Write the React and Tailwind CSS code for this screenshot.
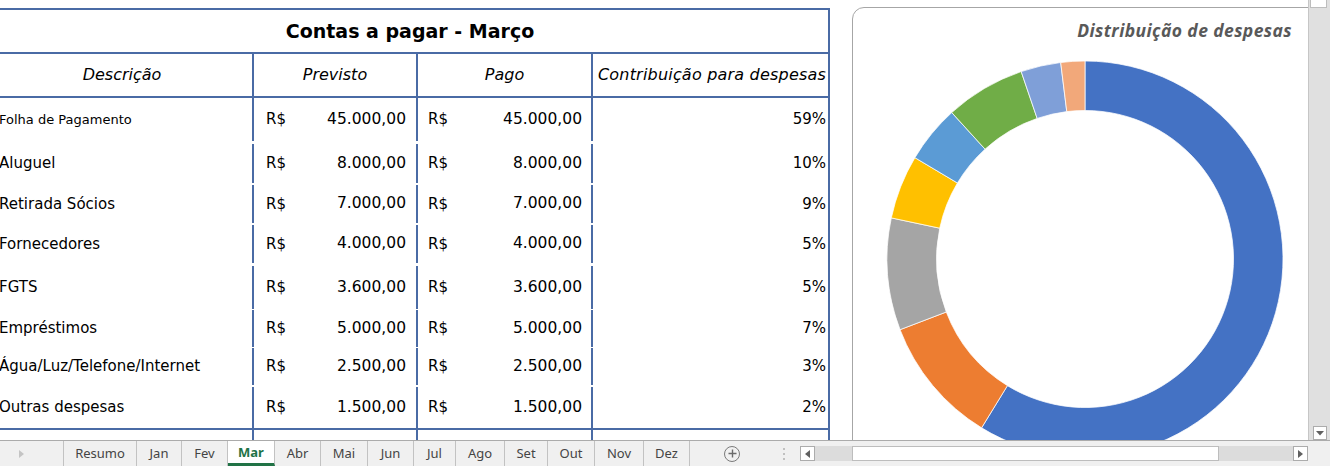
import React from "react";

const rows = [
  { desc: "Folha de Pagamento", prev: "45.000,00", pago: "45.000,00", pct: "59%", h: "h-[43px]", small: true },
  { desc: "Aluguel", prev: "8.000,00", pago: "8.000,00", pct: "10%", h: "h-[42px] pt-[3px]" },
  { desc: "Retirada Sócios", prev: "7.000,00", pago: "7.000,00", pct: "9%", h: "h-[40px] pt-[2px]" },
  { desc: "Fornecedores", prev: "4.000,00", pago: "4.000,00", pct: "5%", h: "h-[40px] pt-[2px]" },
  { desc: "FGTS", prev: "3.600,00", pago: "3.600,00", pct: "5%", h: "h-[46px] pt-[3px]" },
  { desc: "Empréstimos", prev: "5.000,00", pago: "5.000,00", pct: "7%", h: "h-[38px] pt-[1px]" },
  { desc: "Água/Luz/Telefone/Internet", prev: "2.500,00", pago: "2.500,00", pct: "3%", h: "h-[38px] pt-[1px]" },
  { desc: "Outras despesas", prev: "1.500,00", pago: "1.500,00", pct: "2%", h: "h-[45px] pt-[2px] border-b-2" },
];

const slices = [
  { v: 45000, c: "#4472C4" },
  { v: 8000, c: "#ED7D31" },
  { v: 7000, c: "#A5A5A5" },
  { v: 4000, c: "#FFC000" },
  { v: 3600, c: "#5B9BD5" },
  { v: 5000, c: "#70AD47" },
  { v: 2500, c: "#7F9FD8" },
  { v: 1500, c: "#F2A87A" },
];

const tabs = [
  { name: "Resumo", w: "w-[73px]" },
  { name: "Jan", w: "w-[45px]" },
  { name: "Fev", w: "w-[46px]" },
  { name: "Mar", w: "w-[47px]", active: true },
  { name: "Abr", w: "w-[46px]" },
  { name: "Mai", w: "w-[47px]" },
  { name: "Jun", w: "w-[46px]" },
  { name: "Jul", w: "w-[42px]" },
  { name: "Ago", w: "w-[49px]" },
  { name: "Set", w: "w-[43px]" },
  { name: "Out", w: "w-[47px]" },
  { name: "Nov", w: "w-[49px]" },
  { name: "Dez", w: "w-[46px]" },
];

// annular sector, angles measured clockwise from 12 o'clock
const arc = (cx, cy, R, r, a0, a1) => {
  const p = (rad, a) => [cx + rad * Math.sin(a), cy - rad * Math.cos(a)];
  const large = a1 - a0 > Math.PI ? 1 : 0;
  const [x0, y0] = p(R, a0);
  const [x1, y1] = p(R, a1);
  const [x2, y2] = p(r, a1);
  const [x3, y3] = p(r, a0);
  return `M${x0} ${y0} A${R} ${R} 0 ${large} 1 ${x1} ${y1} L${x2} ${y2} A${r} ${r} 0 ${large} 0 ${x3} ${y3} Z`;
};

const Donut = () => {
  const total = slices.reduce((s, x) => s + x.v, 0);
  let a = 0;
  return (
    <svg width="398" height="398" viewBox="0 0 398 398" className="ml-[33px] mt-[18px] shrink-0">
      {slices.map((s, i) => {
        const a0 = a;
        a += (s.v / total) * Math.PI * 2;
        return <path key={i} d={arc(199, 199, 198, 148.5, a0, a)} fill={s.c} stroke="#fff" strokeWidth="0.75" />;
      })}
    </svg>
  );
};

const App = () => {
  return (
    <div className="w-[1330px] h-[466px] overflow-hidden bg-white flex flex-col">
      {/* SHEET + VSCROLL */}
      <div className="h-[440px] flex">
        <div className="w-[1308px] h-[440px] overflow-hidden flex items-start">
          {/* TABLE */}
          <div className="-ml-[10px] mt-[8px] w-[840px] shrink-0 text-black font-['DejaVu_Sans',sans-serif]">
            <div className="h-[46px] border-2 border-[#4a6ba5] flex items-center justify-center font-bold text-[19px]">
              Contas a pagar - Março
            </div>
            <div className="h-[44px] flex border-x-2 border-b-2 border-[#4a6ba5] italic text-[16px]">
              <div className="w-[262px] border-r-2 border-[#4a6ba5] flex items-center justify-center">Descrição</div>
              <div className="w-[164px] border-r-2 border-[#4a6ba5] flex items-center justify-center">Previsto</div>
              <div className="w-[175px] border-r-2 border-[#4a6ba5] flex items-center justify-center">Pago</div>
              <div className="flex-1 flex items-center justify-end pr-[2px] whitespace-nowrap tracking-[0.2px]">Contribuição para despesas</div>
            </div>

            {rows.map((r) => (
              <div key={r.desc} className={`flex border-x-2 border-[#4a6ba5] text-[15px] ${r.h}`}>
                <div className={`w-[262px] border-r-2 border-[#4a6ba5] flex items-center pl-[7px] whitespace-nowrap ${r.small ? "text-[13px]" : ""}`}>
                  {r.desc}
                </div>
                <div className="w-[164px] border-r-2 border-[#4a6ba5] flex items-center justify-between pl-[12px] pr-[10px]">
                  <span>R$</span>
                  <span className="text-[15.5px]">{r.prev}</span>
                </div>
                <div className="w-[175px] border-r-2 border-[#4a6ba5] flex items-center justify-between pl-[10px] pr-[9px]">
                  <span>R$</span>
                  <span className="text-[15.5px]">{r.pago}</span>
                </div>
                <div className="flex-1 flex items-center justify-end pr-[2px]">{r.pct}</div>
              </div>
            ))}

            <div className="h-[20px] flex border-x-2 border-[#4a6ba5]">
              <div className="w-[262px] border-r-2 border-[#4a6ba5]" />
              <div className="w-[164px] border-r-2 border-[#4a6ba5]" />
              <div className="w-[175px] border-r-2 border-[#4a6ba5]" />
            </div>
          </div>

          {/* CHART */}
          <div className="ml-[22px] mt-[7px] w-[480px] h-[460px] shrink-0 border border-[#a6a6a6] rounded-tl-[12px] bg-white flex flex-col">
            <div className="w-[439px] pt-[10px] text-right leading-[24px] text-[17.5px] tracking-[0.4px] font-bold italic text-[#595959] font-['Open_Sans',sans-serif]">
              Distribuição de despesas
            </div>
            <Donut />
          </div>
        </div>

        {/* VERTICAL SCROLLBAR */}
        <div className="w-[22px] h-[440px] border-l border-[#c6c6c6] bg-[#e0e0e0] flex flex-col">
          <div className="ml-[1px] -mt-[1px] w-[17px] h-[9px] bg-white border border-[#bdbdbd]" />
          <div className="flex-1" />
          <div className="ml-[4px] w-[14px] h-[14px] bg-white border border-[#acacac] flex items-center justify-center">
            <svg width="8" height="5" viewBox="0 0 8 5"><polygon points="0,0 8,0 4,4.5" fill="#606060" /></svg>
          </div>
        </div>
      </div>

      {/* SHEET TABS */}
      <div className="h-[26px] flex items-stretch border-t border-[#ababab] bg-[#f0f0f0] text-[13px] text-[#444] font-['Noto_Sans',sans-serif]">
        <div className="w-[64px] border-r border-[#c2c2c2] flex items-center pl-[19px]">
          <svg width="5" height="8" viewBox="0 0 5 8"><polygon points="0,0 5,4 0,8" fill="#c4c4c4" /></svg>
        </div>
        {tabs.map((t) =>
          t.active ? (
            <div key={t.name} className={`${t.w} border-r border-[#c2c2c2] bg-white border-b-[3px] border-b-[#217346] flex items-center justify-center pt-[2px] font-bold text-[#217346]`}>
              {t.name}
            </div>
          ) : (
            <div key={t.name} className={`${t.w} border-r border-[#c2c2c2] flex items-center justify-center`}>
              {t.name}
            </div>
          )
        )}

        <div className="w-[110px] flex items-center">
          <div className="ml-[34px] w-[16px] h-[16px] rounded-full border border-[#7a7a7a] flex items-center justify-center">
            <svg width="9" height="9" viewBox="0 0 9 9">
              <path d="M4.5 0.5V8.5M0.5 4.5H8.5" stroke="#6a6a6a" strokeWidth="1.4" />
            </svg>
          </div>
          <div className="ml-[43px] flex flex-col gap-[3px]">
            <div className="w-[2px] h-[2px] bg-[#c0c0c0]" />
            <div className="w-[2px] h-[2px] bg-[#c0c0c0]" />
            <div className="w-[2px] h-[2px] bg-[#c0c0c0]" />
          </div>
        </div>

        {/* HORIZONTAL SCROLLBAR */}
        <div className="w-[508px] flex items-center">
          <div className="w-[15px] h-[15px] bg-white border border-[#acacac] flex items-center justify-center">
            <svg width="5" height="8" viewBox="0 0 5 8"><polygon points="5,0 0,4 5,8" fill="#606060" /></svg>
          </div>
          <div className="flex-1 h-[15px] bg-[#dcdcdc] flex">
            <div className="w-[37px]" />
            <div className="w-[367px] h-full bg-white border border-[#bdbdbd]" />
          </div>
          <div className="w-[15px] h-[15px] bg-white border border-[#acacac] flex items-center justify-center">
            <svg width="5" height="8" viewBox="0 0 5 8"><polygon points="0,0 5,4 0,8" fill="#606060" /></svg>
          </div>
        </div>
      </div>
    </div>
  );
};

export default App;
